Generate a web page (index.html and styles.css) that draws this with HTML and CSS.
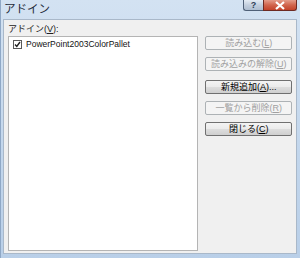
FILE: index.html
```html
<!DOCTYPE html>
<html lang="ja">
<head>
<meta charset="utf-8">
<link rel="stylesheet" href="styles.css">
</head>
<body>
<div class="window">
  <div class="titlebar">
    <span class="title">アドイン</span>
    <div class="caption-buttons">
      <div class="cap help"><span>?</span></div>
      <div class="cap close"><svg width="12" height="9" viewBox="0 0 12 9"><path d="M2 1 L10 8 M10 1 L2 8" stroke="#fff" stroke-width="2.2" fill="none"/></svg></div>
    </div>
  </div>
  <div class="client">
    <div class="left">
      <div class="label">アドイン(<u>V</u>):</div>
      <div class="listbox">
        <div class="item">
          <span class="check"><svg width="7" height="7" viewBox="0 0 7 7"><path d="M1 3.5 L2.8 5.5 L6 1" stroke="#222" stroke-width="1.4" fill="none"/></svg></span>
          <span class="item-text">PowerPoint2003ColorPallet</span>
        </div>
      </div>
    </div>
    <div class="buttons">
      <div class="btn disabled">読み込む(<u>L</u>)</div>
      <div class="btn disabled">読み込みの解除(<u>U</u>)</div>
      <div class="btn gap">新規追加(<u>A</u>)...</div>
      <div class="btn disabled">一覧から削除(<u>R</u>)</div>
      <div class="btn">閉じる(<u>C</u>)</div>
    </div>
  </div>
</div>
</body>
</html>
```

FILE: styles.css
```css
html, body {
  margin: 0;
  padding: 0;
  background: #ffffff;
}
body {
  font-family: "Liberation Sans", "Noto Sans CJK JP", sans-serif;
  font-size: 9px;
  color: #000;
}
.window {
  width: 300px;
  height: 258px;
  box-sizing: border-box;
  background: linear-gradient(#d3e2f2, #c2d6ec 60%, #b9cfe8);
  display: flex;
  flex-direction: column;
  padding: 0 3px 4px 2px;
  border-left: 1px solid #8fa8c6;
}
.titlebar {
  height: 19px;
  flex: none;
  display: flex;
  align-items: flex-start;
  justify-content: space-between;
  position: relative;
}
.title {
  font-size: 11.5px;
  line-height: 14px;
  margin-top: 2px;
  margin-left: 1px;
  color: #1e2a3a;
}
.caption-buttons {
  display: flex;
  margin-right: 0;
}
.cap {
  height: 11px;
  box-sizing: border-box;
  border: 1px solid #4f6077;
  border-top: none;
  display: flex;
  align-items: center;
  justify-content: center;
}
.help {
  width: 20px;
  border-radius: 0 0 0 3px;
  border-right: none;
  background: linear-gradient(#e4ebf4, #c3cfde 50%, #aebdd0);
  color: #2e3f57;
  font-size: 9px;
  font-weight: bold;
  line-height: 9px;
}
.close {
  width: 34px;
  border-radius: 0 0 3px 0;
  border-color: #6e2a22;
  background: linear-gradient(#e49c8a, #d1654d 50%, #c3432a);
}
.client {
  flex: 1;
  background: #f0f0f0;
  border: 1px solid #a9b8c9;
  display: flex;
  padding: 0 4px 2px 4px;
  gap: 7px;
}
.left {
  display: flex;
  flex-direction: column;
  width: 191px;
}
.label {
  height: 16px;
  box-sizing: border-box;
  line-height: 12px;
  padding-top: 3px;
  color: #222;
}
.listbox {
  flex: 1;
  background: #fff;
  border: 1px solid #b4b4b4;
  padding: 2px 4px;
}
.item {
  display: flex;
  align-items: center;
  gap: 4px;
  height: 10px;
}
.check {
  width: 7px;
  height: 7px;
  border: 1px solid #5a5a5a;
  background: #fff;
  display: flex;
}
.item-text {
  font-size: 8.5px;
  line-height: 10px;
  color: #111;
}
.buttons {
  display: flex;
  flex-direction: column;
  width: 87px;
  padding-top: 16px;
  gap: 7px;
}
.btn {
  height: 14px;
  box-sizing: border-box;
  border: 1px solid #707070;
  border-radius: 2px;
  background: linear-gradient(#f4f4f4, #ebebeb 48%, #dddddd 52%, #cfcfcf);
  text-align: center;
  line-height: 12px;
  font-size: 9px;
  color: #000;
}
.btn.gap {
  margin-top: 2px;
}
.btn.disabled {
  border-color: #adb2b5;
  background: #f4f4f4;
  color: #a0a0a0;
}
u {
  text-underline-offset: 1px;
}
```
